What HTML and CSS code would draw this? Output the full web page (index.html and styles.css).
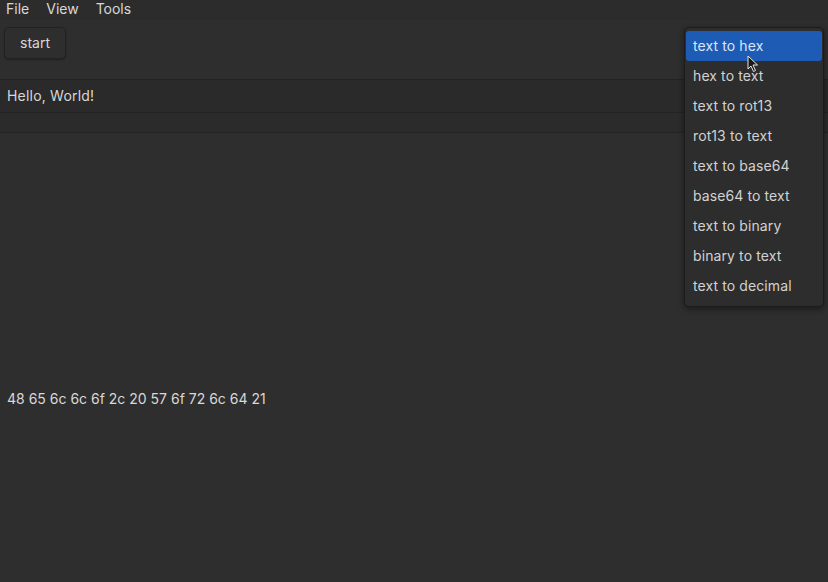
FILE: index.html
```html
<!DOCTYPE html>
<html lang="en">
<head>
  <meta charset="utf-8">
  <title>Converter</title>
  <link rel="stylesheet" href="styles.css">
</head>
<body>
  <div class="window">
    <div class="menubar">
      <span class="menuItem">File</span>
      <span class="menuItem">View</span>
      <span class="menuItem">Tools</span>
    </div>

    <div class="toolbar">
      <button class="startButton">start</button>
    </div>

    <div class="inputRow">Hello, World!</div>
    <div class="emptyRow"></div>

    <div class="output">48 65 6c 6c 6f 2c 20 57 6f 72 6c 64 21</div>

    <ul class="dropdown">
      <li class="selected">text to hex</li>
      <li>hex to text</li>
      <li>text to rot13</li>
      <li>rot13 to text</li>
      <li>text to base64</li>
      <li>base64 to text</li>
      <li>text to binary</li>
      <li>binary to text</li>
      <li>text to decimal</li>
    </ul>

    <svg class="cursor" width="12" height="18" viewBox="0 0 12 18">
      <path d="M1 1 L1 14 L4 11 L6.5 16.5 L8.5 15.5 L6 10 L10.5 10 Z" fill="#1a1a1a" stroke="#e8e8e8" stroke-width="1"/>
    </svg>
  </div>
</body>
</html>
```

FILE: styles.css
```css
body {
  margin: 0;
  background-color: #2e2e2e;
  color: #d8d8d8;
  font-family: Inter, 'Noto Sans', sans-serif;
  font-size: 14px;
}

.window {
  position: relative;
  display: flex;
  flex-direction: column;
  height: 582px;
  overflow: hidden;
}

.menubar {
  display: flex;
  gap: 17px;
  height: 20px;
  line-height: 18px;
  padding-left: 6px;
  background-color: #2c2c2c;
}

.toolbar {
  height: 59px;
  padding: 7px 4px 0;
  box-sizing: border-box;
}

.startButton {
  width: 62px;
  height: 32px;
  background-color: #2e2e2e;
  border: 1px solid #222;
  border-radius: 5px;
  color: #d8d8d8;
  font-family: inherit;
  font-size: 14px;
  padding: 0 0 2px;
  box-shadow: 0 1px 2px rgba(0, 0, 0, 0.3);
}

.inputRow {
  height: 32px;
  line-height: 32px;
  padding-left: 7px;
  background-color: #2a2a2a;
  border-top: 1px solid #232323;
  border-bottom: 1px solid #232323;
  letter-spacing: 0.2px;
}

.emptyRow {
  height: 19px;
  background-color: #2b2b2b;
  border-bottom: 1px solid #242424;
}

.output {
  padding: 257px 7px 0;
}

.dropdown {
  position: absolute;
  top: 27px;
  left: 684px;
  width: 138px;
  margin: 0;
  padding: 3px 0 5px;
  list-style: none;
  background-color: #2d2d2d;
  border: 1px solid #1c1c1c;
  border-radius: 5px;
  box-shadow: 0 2px 6px rgba(0, 0, 0, 0.45);
}

.dropdown li {
  height: 30px;
  line-height: 30px;
  margin: 0 1px;
  padding-left: 7px;
  color: #d2d2d2;
  letter-spacing: 0.1px;
}

.dropdown .selected {
  background-color: #1d5bb4;
  color: #d9e6fa;
  border-radius: 3px;
}

.cursor {
  position: absolute;
  top: 55px;
  left: 747px;
}
```
